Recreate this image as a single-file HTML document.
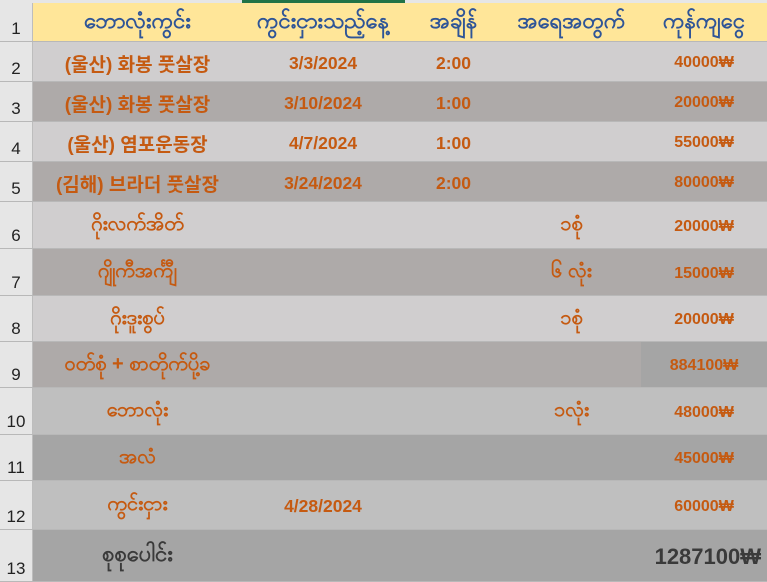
<!DOCTYPE html><html><head><meta charset="utf-8"><style>
body{margin:0;width:767px;height:582px;overflow:hidden;background:#fff;font-family:"Liberation Sans","Noto Sans CJK KR",sans-serif}
.r{position:absolute;left:0;width:767px;border-bottom:1px solid #b8b8b8;box-sizing:border-box}
.n{position:absolute;left:0;top:0;bottom:0;width:33px;background:#e6e6e6;border-right:1px solid #bdbdbd;font-size:17px;color:#222;display:flex;align-items:flex-end;justify-content:center;padding-bottom:2px;box-sizing:border-box}
.c{position:absolute;top:0;bottom:0;display:flex;align-items:center;justify-content:center;font-weight:bold;color:#c55a11;font-size:16px;padding-top:3px;box-sizing:border-box}
.k{font-size:19px}
.t{font-size:17.5px}
.m{font-size:20px;font-weight:bold;padding-top:0}
.h .c{color:#2f5597;font-size:22px;padding-top:0}
.a{left:34px;width:207px}.b{left:241px;width:164px}.cc{left:405px;width:97px}.d{left:502px;width:139px}.e{left:641px;width:126px}
</style></head><body>
<div style="position:absolute;left:0;top:0;width:767px;height:3px;background:#e6e6e6"></div>
<div style="position:absolute;left:242px;top:0;width:163px;height:3px;background:#217346"></div>
<div class="r h" style="top:3px;height:39px;background:#ffe699"><div class="n" style="background:#e6e6e6">1</div><div class="c a">ဘောလုံးကွင်း</div><div class="c b">ကွင်းငှားသည့်နေ့</div><div class="c cc">အချိန်</div><div class="c d">အရေအတွက်</div><div class="c e">ကုန်ကျငွေ</div></div>
<div class="r" style="top:42px;height:40px;background:#d0cecf"><div class="n">2</div><div class="c a k">(울산) 화봉 풋살장</div><div class="c b t">3/3/2024</div><div class="c cc t">2:00</div><div class="c e">40000₩</div></div>
<div class="r" style="top:82px;height:40px;background:#aeaaa9"><div class="n">3</div><div class="c a k">(울산) 화봉 풋살장</div><div class="c b t">3/10/2024</div><div class="c cc t">1:00</div><div class="c e">20000₩</div></div>
<div class="r" style="top:122px;height:40px;background:#d0cecf"><div class="n">4</div><div class="c a k">(울산) 염포운동장</div><div class="c b t">4/7/2024</div><div class="c cc t">1:00</div><div class="c e">55000₩</div></div>
<div class="r" style="top:162px;height:40px;background:#aeaaa9"><div class="n">5</div><div class="c a k">(김해) 브라더 풋살장</div><div class="c b t">3/24/2024</div><div class="c cc t">2:00</div><div class="c e">80000₩</div></div>
<div class="r" style="top:202px;height:47px;background:#d0cecf"><div class="n">6</div><div class="c a m">ဂိုးလက်အိတ်</div><div class="c d m">၁စုံ</div><div class="c e">20000₩</div></div>
<div class="r" style="top:249px;height:47px;background:#aeaaa9"><div class="n">7</div><div class="c a m">ဂျိုကီအင်္ကျီ</div><div class="c d m">၆ လုံး</div><div class="c e">15000₩</div></div>
<div class="r" style="top:296px;height:46px;background:#d0cecf"><div class="n">8</div><div class="c a m">ဂိုးဒူးစွပ်</div><div class="c d m">၁စုံ</div><div class="c e">20000₩</div></div>
<div class="r" style="top:342px;height:46px;background:#aeaaa9"><div class="n">9</div><div class="c a m">ဝတ်စုံ + စာတိုက်ပို့ခ</div><div class="c e" style="background:#a5a5a5">884100₩</div></div>
<div class="r" style="top:388px;height:47px;background:#bfbfbf"><div class="n">10</div><div class="c a m">ဘောလုံး</div><div class="c d m">၁လုံး</div><div class="c e">48000₩</div></div>
<div class="r" style="top:435px;height:46px;background:#a5a5a5"><div class="n">11</div><div class="c a m">အလံ</div><div class="c e">45000₩</div></div>
<div class="r" style="top:481px;height:49px;background:#bfbfbf"><div class="n">12</div><div class="c a m">ကွင်းငှား</div><div class="c b t">4/28/2024</div><div class="c e">60000₩</div></div>
<div class="r" style="top:530px;height:52px;background:#a5a5a5"><div class="n">13</div><div class="c a m" style="color:#3a3a3a;font-size:22px">စုစုပေါင်း</div><div class="c e" style="color:#3a3a3a;font-size:22px;justify-content:flex-end;padding-right:6px">1287100₩</div></div>
</body></html>
